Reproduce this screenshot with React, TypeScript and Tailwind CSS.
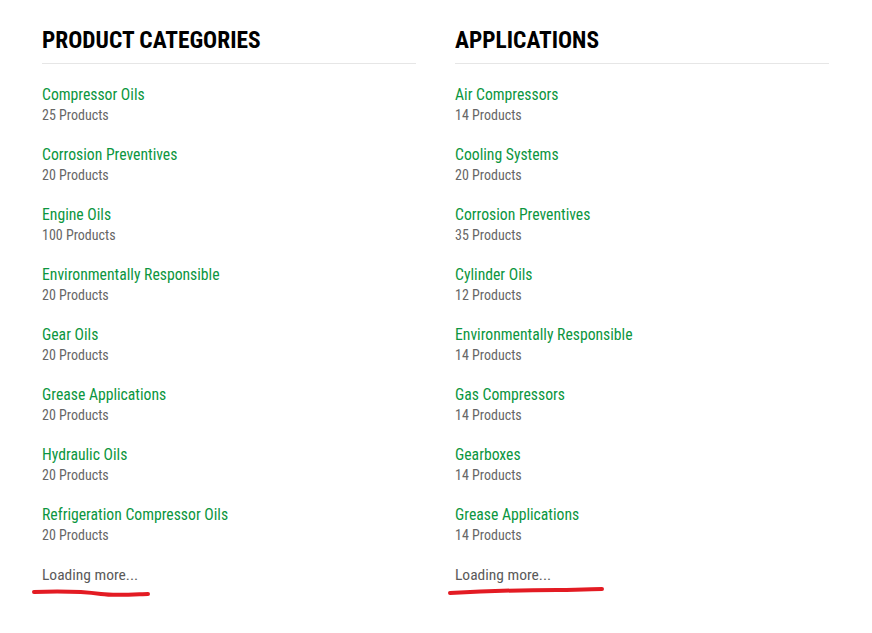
import React from "react";

type Item = { name: string; count: number };

const categories: Item[] = [
  { name: "Compressor Oils", count: 25 },
  { name: "Corrosion Preventives", count: 20 },
  { name: "Engine Oils", count: 100 },
  { name: "Environmentally Responsible", count: 20 },
  { name: "Gear Oils", count: 20 },
  { name: "Grease Applications", count: 20 },
  { name: "Hydraulic Oils", count: 20 },
  { name: "Refrigeration Compressor Oils", count: 20 },
];

const applications: Item[] = [
  { name: "Air Compressors", count: 14 },
  { name: "Cooling Systems", count: 20 },
  { name: "Corrosion Preventives", count: 35 },
  { name: "Cylinder Oils", count: 12 },
  { name: "Environmentally Responsible", count: 14 },
  { name: "Gas Compressors", count: 14 },
  { name: "Gearboxes", count: 14 },
  { name: "Grease Applications", count: 14 },
];

function Column({
  title,
  items,
  mark,
}: {
  title: string;
  items: Item[];
  mark: React.ReactNode;
}) {
  return (
    <div className="w-[374px]">
      <h2 className="text-[23.4px] leading-[28px] font-bold text-black uppercase pb-[9px] border-b border-[#e6e6e6]">
        {title}
      </h2>
      <ul className="mt-[21px] flex flex-col gap-[20px]">
        {items.map((it) => (
          <li key={it.name} className="flex flex-col">
            <a className="text-[15.7px] leading-[20px] text-[#0b9640] cursor-pointer">{it.name}</a>
            <span className="text-[14px] leading-[20px] text-[#666]">{it.count} Products</span>
          </li>
        ))}
      </ul>
      <div className="mt-[20px] text-[15.5px] leading-[20px] text-[#5a5a5a]">Loading more...</div>
      {mark}
    </div>
  );
}

export default function App() {
  return (
    <div
      className="min-h-[633px] bg-white pl-[42px] pt-[26px] flex gap-[39px]"
      style={{ fontFamily: '"Roboto Condensed", "Liberation Sans Narrow", "DejaVu Sans Condensed", Roboto, sans-serif' }}
    >
      <Column
        title="Product Categories"
        items={categories}
        mark={
          <svg width="130" height="12" viewBox="0 0 130 12" className="-ml-[11px] mt-[2px] block">
            <path d="M3 5 C 30 4, 55 5, 70 7 S 110 7, 117 7" stroke="#e31b23" strokeWidth="4" fill="none" strokeLinecap="round" />
          </svg>
        }
      />
      <Column
        title="Applications"
        items={applications}
        mark={
          <svg width="170" height="12" viewBox="0 0 170 12" className="-ml-[8px] mt-[0px] block">
            <path d="M3 8 C 40 6, 80 5, 110 5 S 145 4, 155 4" stroke="#e31b23" strokeWidth="4" fill="none" strokeLinecap="round" />
          </svg>
        }
      />
    </div>
  );
}
